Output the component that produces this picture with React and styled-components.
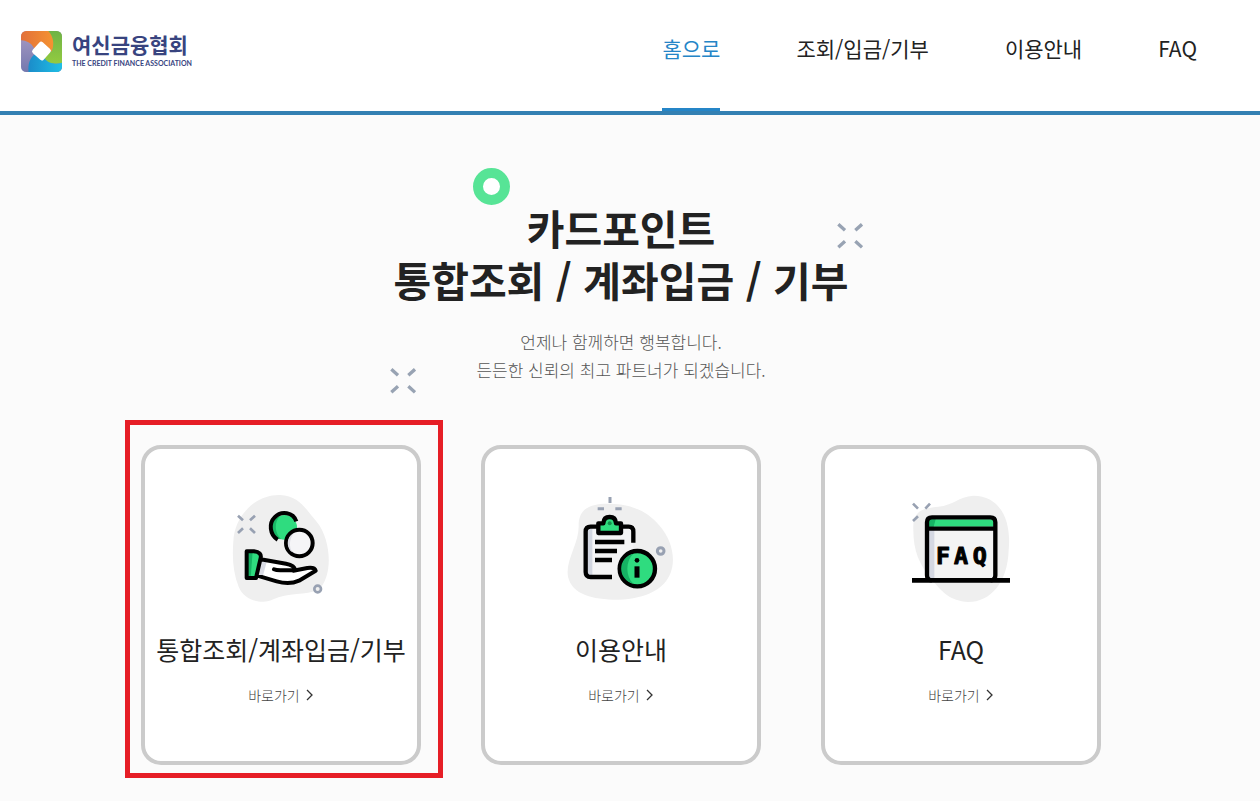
import React from "react";
import styled, { createGlobalStyle, css } from "styled-components";

const GlobalStyle = createGlobalStyle`
  *, *::before, *::after { box-sizing: border-box; }
  body {
    margin: 0;
    background: #fbfbfb;
    color: #222;
    font-family: "Noto Sans CJK KR", "Noto Sans", sans-serif;
  }
  a { color: inherit; text-decoration: none; }
`;

const Header = styled.header`
  display: flex;
  justify-content: space-between;
  align-items: flex-start;
  padding: 0 63px 0 21px;
  background: #fff;
  border-bottom: 4px solid #3380b3;
`;

const Logo = styled.a`
  display: flex;
  align-items: flex-start;
  gap: 10px;
  padding-top: 30px;
`;

const LogoText = styled.span`
  display: flex;
  flex-direction: column;
  color: #38447f;
`;

const LogoName = styled.strong`
  font-size: 21px;
  font-weight: 700;
  line-height: 28px;
`;

const LogoCaption = styled.span`
  font-family: Lato, sans-serif;
  font-size: 7px;
  font-weight: 700;
  line-height: 10px;
  white-space: nowrap;
`;

const NavList = styled.ul`
  display: flex;
  gap: 76px;
  margin: 0;
  padding: 0;
  list-style: none;
`;

const NavLink = styled.a`
  display: block;
  padding: 32px 0 44px;
  border-bottom: 3px solid transparent;
  font-size: 21px;
  line-height: 32px;
  white-space: nowrap;
  ${({ $active }) =>
    $active &&
    css`
      color: #2585c7;
      border-bottom-color: #2585c7;
    `}
`;

const Main = styled.main`
  padding: 0 18px 36px 0;
`;

const Hero = styled.section`
  position: relative;
  width: 480px;
  max-width: 100%;
  margin: 0 auto;
  padding-top: 86px;
  text-align: center;
`;

const HeroTitle = styled.h1`
  margin: 0;
  font-size: 41px;
  font-weight: 700;
  line-height: 52px;
  white-space: nowrap;
`;

const HeroText = styled.p`
  margin: 23px 0 0;
  color: #555;
  font-size: 17px;
  font-weight: 300;
  line-height: 28px;
`;

const Ring = styled.span`
  position: absolute;
  top: 53px;
  left: 92px;
  width: 37px;
  height: 37px;
  border: 10px solid #57e496;
  border-radius: 50%;
  background: #fff;
`;

const Spark = styled.svg`
  position: absolute;
  top: ${({ $top }) => $top}px;
  left: ${({ $left }) => $left}px;
  width: 26px;
  height: 26px;
`;

const CardList = styled.ul`
  display: flex;
  flex-wrap: wrap;
  justify-content: center;
  gap: 60px;
  margin: 0;
  padding: 61px 0 0;
  list-style: none;
`;

const CardItem = styled.li`
  position: relative;
`;

const Highlight = styled.span`
  position: absolute;
  inset: -25px -22px -13px -16px;
  border: 5px solid #e61e26;
  pointer-events: none;
`;

const Card = styled.a`
  display: flex;
  flex-direction: column;
  align-items: center;
  width: 280px;
  min-height: 320px;
  padding: 41px 0;
  border: 4px solid #cbcbcb;
  border-radius: 20px;
  background: #fff;
`;

const CardIcon = styled.svg`
  width: 120px;
  height: 120px;
`;

const CardTitle = styled.h2`
  margin: 19px 0 0;
  font-size: 25px;
  font-weight: 400;
  line-height: 40px;
  white-space: nowrap;
`;

const CardMore = styled.span`
  display: flex;
  align-items: center;
  gap: 6px;
  margin-top: 14px;
  color: #444;
  font-size: 14px;
  font-weight: 300;
  line-height: 24px;
`;

const LogoMark = () => (
  <svg width="41" height="42" viewBox="0 -3 120 123" aria-hidden="true">
    <defs>
      <linearGradient id="lgOrange" x1="0" y1="0" x2="1" y2="0">
        <stop offset="0" stopColor="#e2703a" />
        <stop offset="1" stopColor="#f59331" />
      </linearGradient>
      <linearGradient id="lgGreen" x1="0" y1="0" x2="0" y2="1">
        <stop offset="0" stopColor="#6fb345" />
        <stop offset="1" stopColor="#93cb40" />
      </linearGradient>
      <linearGradient id="lgBlue" x1="0" y1="0" x2="1" y2="0">
        <stop offset="0" stopColor="#1b8cca" />
        <stop offset="1" stopColor="#1fc0e6" />
      </linearGradient>
      <linearGradient id="lgViolet" x1="0" y1="0" x2="0" y2="1">
        <stop offset="0" stopColor="#a99bc4" />
        <stop offset="1" stopColor="#7478ae" />
      </linearGradient>
      <clipPath id="lgClip"><rect width="120" height="120" rx="15" /></clipPath>
    </defs>
    <g clipPath="url(#lgClip)">
      <rect width="120" height="120" fill="url(#lgViolet)" />
      <path d="M0 0H82C99 20 99 40 90 60L60 58L38 50C30 34 15 28 0 27Z" fill="url(#lgOrange)" />
      <path d="M80 0H120V94C100 98 80 96 70 82L60 58L90 60C98 40 96 18 80 0Z" fill="url(#lgGreen)" />
      <path d="M120 93V120H22C20 95 26 80 40 68L60 58L70 82C80 96 100 98 120 93Z" fill="url(#lgBlue)" />
      <rect x="39" y="37" width="43" height="43" rx="7" transform="rotate(42 60 58)" fill="#fff" />
    </g>
  </svg>
);

const SparkMark = (props) => (
  <Spark viewBox="0 0 78 78" aria-hidden="true" {...props}>
    <path d="M4 4 24 22M75 4 55 22M4 73 24 55M75 73 55 55" stroke="#98a3b3" strokeWidth="10" fill="none" />
  </Spark>
);

const HandIcon = () => (
  <CardIcon viewBox="3 30 360 360" aria-hidden="true">
    <path d="M40 185C42 110 105 43 180 45C240 47 260 92 290 125C335 180 340 290 295 330C260 345 200 338 160 358C135 373 75 367 56 320C40 280 36 235 40 185Z" fill="#efefef" />
    <path d="M54 107 69 121M105 107 90 121M54 159 69 145M105 159 90 145" stroke="#98a1b2" strokeWidth="8" />
    <circle cx="194" cy="142" r="37" fill="#2fdc7f" />
    <path d="M180 108C162 125 163 160 184 178L172 176C148 160 150 118 180 108Z" fill="#19b765" />
    <path d="M173 179C148 164 147 129 163 113C184 90 220 97 229 124" fill="none" stroke="#000" strokeWidth="12" />
    <circle cx="238" cy="189" r="40" fill="#f5f5f7" stroke="#000" strokeWidth="12" />
    <path d="M222 159C208 175 206 200 217 217C200 206 196 172 222 159Z" fill="#dcdde5" />
    <path d="M120 239 190 252C215 252 226 260 224 270L262 264Q284 262 288 272L235 304Q205 314 175 306L112 287Z" fill="#fff" />
    <path d="M124 242 140 246 128 290 112 286Z" fill="#d9dbe4" />
    <path d="M80 214H106Q124 218 122 232L108 294H80Z" fill="#2fdc7f" />
    <path d="M80 214H98L92 294H80Z" fill="#16b364" />
    <path d="M80 214H102Q126 217 122 234L108 294H80ZM122 238 198 251Q226 256 224 271H181Q168 271 162 268M220 272 262 264Q284 261 287 272L237 302Q208 315 170 304L112 287" fill="none" stroke="#000" strokeWidth="12" strokeLinejoin="round" strokeLinecap="round" />
    <circle cx="293" cy="327" r="10" fill="#efefef" stroke="#98a1b2" strokeWidth="8" />
  </CardIcon>
);

const ClipboardIcon = () => (
  <CardIcon viewBox="33 30 360 360" aria-hidden="true">
    <path d="M86 132C88 86 120 70 180 71C242 73 290 90 330 139C365 180 378 235 362 278C345 325 290 356 205 359C125 359 66 342 54 290C45 240 89 190 86 132Z" fill="#efefef" />
    <path d="M180 51V69M143 86H162M196 86H215" stroke="#98a1b2" strokeWidth="9" />
    <path d="M186 290H120Q107 290 107 277V153Q107 140 120 140H237Q250 140 250 153V230L186 290Z" fill="#f4f4f5" />
    <path d="M112 145H127V288H112Z" fill="#d2d6e0" />
    <path d="M186 291H122Q107 291 107 276V155Q107 140 122 140H236Q250 140 250 155V188" fill="none" stroke="#000" strokeWidth="13" />
    <path d="M145 130H160Q161 111 179 111Q197 111 198 130H213V159H145Z" fill="#2fdc7f" stroke="#000" strokeWidth="13" strokeLinejoin="round" />
    <circle cx="179" cy="130" r="6" fill="#14914e" />
    <path d="M135 186H223M135 213H201M135 240H186" stroke="#000" strokeWidth="13" />
    <circle cx="262" cy="266" r="53" fill="#2fdc7f" stroke="#000" strokeWidth="13" />
    <path d="M250 221A46 46 0 0 0 250 311C226 290 226 242 250 221Z" fill="#16b364" />
    <circle cx="261" cy="241" r="7" fill="#000" />
    <path d="M261 259V293" stroke="#000" strokeWidth="15" />
    <circle cx="332" cy="213" r="10" fill="#efefef" stroke="#98a1b2" strokeWidth="9" />
  </CardIcon>
);

const IconWord = styled.text`
  font-family: "DejaVu Sans Mono", monospace;
  font-size: 70px;
  font-weight: 700;
  text-anchor: middle;
  stroke: #000;
  stroke-width: 3px;
  stroke-linejoin: round;
`;

const FaqIcon = () => (
  <CardIcon viewBox="18 30 360 360" aria-hidden="true">
    <path d="M55 150C52 96 78 84 130 80C175 76 190 50 235 47C315 47 350 120 341 210C338 310 285 366 220 366C165 363 140 335 112 300C72 255 55 210 55 150Z" fill="#efefef" />
    <path d="M54 71 69 86M105 71 91 86M54 123 69 109" stroke="#98a1b2" strokeWidth="8" />
    <path d="M96 125Q96 112 109 112H288Q301 112 301 125V297H96Z" fill="#f4f4f4" />
    <path d="M102 150H118V296H102Z" fill="#d5d8e2" />
    <path d="M102 118H296V140H102Z" fill="#2fdc7f" />
    <path d="M102 118H122L116 140H102Z" fill="#16b364" />
    <path d="M110 301Q96 301 96 286V127Q96 112 111 112H286Q301 112 301 127V286Q301 301 287 301M96 146H301" fill="none" stroke="#000" strokeWidth="13" />
    <path d="M51 301H345" stroke="#000" strokeWidth="14" />
    <IconWord x="144" y="251">F</IconWord>
    <IconWord x="198" y="251">A</IconWord>
    <IconWord x="254" y="251">Q</IconWord>
  </CardIcon>
);

const Chevron = () => (
  <svg width="8" height="12" viewBox="0 0 8 12" aria-hidden="true">
    <path d="M1 1 6 6 1 11" fill="none" stroke="#333" strokeWidth="1.3" />
  </svg>
);

const navItems = ["홈으로", "조회/입금/기부", "이용안내", "FAQ"];

const cards = [
  { title: "통합조회/계좌입금/기부", Icon: HandIcon, highlighted: true },
  { title: "이용안내", Icon: ClipboardIcon },
  { title: "FAQ", Icon: FaqIcon },
];

export default function App() {
  return (
    <div lang="ko">
      <GlobalStyle />
      <Header>
        <Logo href="#">
          <LogoMark />
          <LogoText>
            <LogoName>여신금융협회</LogoName>
            <LogoCaption>THE CREDIT FINANCE ASSOCIATION</LogoCaption>
          </LogoText>
        </Logo>
        <nav>
          <NavList>
            {navItems.map((label, i) => (
              <li key={label}>
                <NavLink href="#" $active={i === 0}>{label}</NavLink>
              </li>
            ))}
          </NavList>
        </nav>
      </Header>
      <Main>
        <Hero>
          <Ring />
          <SparkMark $top={108} $left={456} />
          <SparkMark $top={253} $left={9} />
          <HeroTitle>
            카드포인트<br />통합조회 / 계좌입금 / 기부
          </HeroTitle>
          <HeroText>
            언제나 함께하면 행복합니다.<br />든든한 신뢰의 최고 파트너가 되겠습니다.
          </HeroText>
        </Hero>
        <CardList>
          {cards.map(({ title, Icon, highlighted }) => (
            <CardItem key={title}>
              <Card href="#">
                <Icon />
                <CardTitle>{title}</CardTitle>
                <CardMore>바로가기 <Chevron /></CardMore>
              </Card>
              {highlighted && <Highlight />}
            </CardItem>
          ))}
        </CardList>
      </Main>
    </div>
  );
}
